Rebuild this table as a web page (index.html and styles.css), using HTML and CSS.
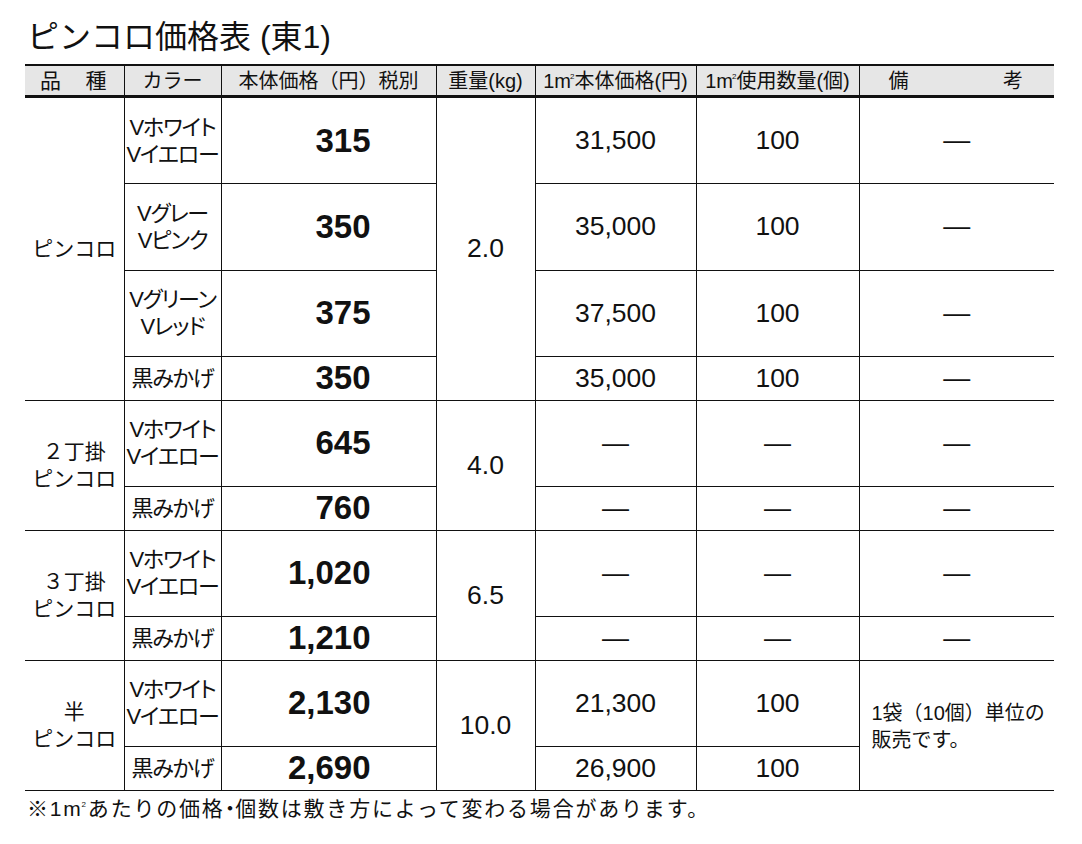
FILE: index.html
```html
<!DOCTYPE html>
<html lang="ja">
<head>
<meta charset="utf-8">
<title>ピンコロ価格表（東1）</title>
<link rel="stylesheet" href="styles.css">
</head>
<body>
<div class="page">
  <h1 class="title">ピンコロ価格表 (東1)</h1>
  <table class="price">
    <colgroup>
      <col class="c-kind"><col class="c-color"><col class="c-price"><col class="c-weight"><col class="c-unit"><col class="c-qty"><col class="c-note">
    </colgroup>
    <thead>
      <tr class="head">
        <th class="kind"><span class="spread spread-kind"><span>品</span><span>種</span></span></th>
        <th>カラー</th>
        <th>本体価格（円）税別</th>
        <th>重量(kg)</th>
        <th>1m<span class="sq">2</span>本体価格(円)</th>
        <th>1m<span class="sq">2</span>使用数量(個)</th>
        <th class="last"><span class="spread spread-note"><span>備</span><span>考</span></span></th>
      </tr>
    </thead>
    <tbody>
      <tr class="tall first">
        <td class="kind" rowspan="4">ピンコロ</td>
        <td class="color">Vホワイト<br>Vイエロー</td>
        <td class="price">315</td>
        <td class="weight" rowspan="4">2.0</td>
        <td class="num">31,500</td>
        <td class="num">100</td>
        <td class="dash last">—</td>
      </tr>
      <tr class="tall">
        <td class="color">Vグレー<br>Vピンク</td>
        <td class="price">350</td>
        <td class="num">35,000</td>
        <td class="num">100</td>
        <td class="dash last">—</td>
      </tr>
      <tr class="tall">
        <td class="color">Vグリーン<br>Vレッド</td>
        <td class="price">375</td>
        <td class="num">37,500</td>
        <td class="num">100</td>
        <td class="dash last">—</td>
      </tr>
      <tr class="short">
        <td class="color">黒みかげ</td>
        <td class="price">350</td>
        <td class="num">35,000</td>
        <td class="num">100</td>
        <td class="dash last">—</td>
      </tr>
      <tr class="tall">
        <td class="kind" rowspan="2">２丁掛<br>ピンコロ</td>
        <td class="color">Vホワイト<br>Vイエロー</td>
        <td class="price">645</td>
        <td class="weight" rowspan="2">4.0</td>
        <td class="dash">—</td>
        <td class="dash">—</td>
        <td class="dash last">—</td>
      </tr>
      <tr class="short">
        <td class="color">黒みかげ</td>
        <td class="price">760</td>
        <td class="dash">—</td>
        <td class="dash">—</td>
        <td class="dash last">—</td>
      </tr>
      <tr class="tall">
        <td class="kind" rowspan="2">３丁掛<br>ピンコロ</td>
        <td class="color">Vホワイト<br>Vイエロー</td>
        <td class="price">1,020</td>
        <td class="weight" rowspan="2">6.5</td>
        <td class="dash">—</td>
        <td class="dash">—</td>
        <td class="dash last">—</td>
      </tr>
      <tr class="short">
        <td class="color">黒みかげ</td>
        <td class="price">1,210</td>
        <td class="dash">—</td>
        <td class="dash">—</td>
        <td class="dash last">—</td>
      </tr>
      <tr class="tall">
        <td class="kind" rowspan="2">半<br>ピンコロ</td>
        <td class="color">Vホワイト<br>Vイエロー</td>
        <td class="price">2,130</td>
        <td class="weight" rowspan="2">10.0</td>
        <td class="num">21,300</td>
        <td class="num">100</td>
        <td class="note last" rowspan="2">1袋（10個）単位の<br>販売です。</td>
      </tr>
      <tr class="short">
        <td class="color">黒みかげ</td>
        <td class="price">2,690</td>
        <td class="num">26,900</td>
        <td class="num">100</td>
      </tr>
    </tbody>
  </table>
  <p class="footnote">※1m<span class="sq">2</span>あたりの価格<span class="dot">・</span>個数は敷き方によって変わる場合があります。</p>
</div>
</body>
</html>
```

FILE: styles.css
```css
html, body {
  margin: 0;
  padding: 0;
  background: #ffffff;
}

body {
  color: #111111;
  font-family: "Liberation Sans", "Noto Sans CJK JP", sans-serif;
}

.page {
  padding-left: 25px;
  width: 1029px;
}

.title {
  margin: 0;
  padding: 17px 0 0 2px;
  font-size: 32px;
  font-weight: normal;
  line-height: 40px;
}

.price {
  margin-top: 7px;
  width: 1029px;
  table-layout: fixed;
  border-collapse: collapse;
}

.c-kind { width: 99px; }
.c-color { width: 97px; }
.c-price { width: 215px; }
.c-weight { width: 99px; }
.c-unit { width: 161px; }
.c-qty { width: 163px; }
.c-note { width: 195px; }

.price th,
.price td {
  border: 1px solid #111111;
  padding: 0;
  text-align: center;
  vertical-align: middle;
}

.price .kind { border-left: none; }
.price .last { border-right: none; }

.head th {
  height: 29px;
  background: #e6e6e6;
  border-top: 2px solid #111111;
  border-bottom: 3px solid #111111;
  font-size: 20px;
  font-weight: normal;
  line-height: 24px;
  white-space: nowrap;
}

.spread {
  display: flex;
  justify-content: space-between;
}

.spread-kind { padding: 0 17px 0 15px; }
.spread-note { padding: 0 31px 0 29px; }

.sq {
  font-size: 8px;
  vertical-align: 9px;
  line-height: 0;
  margin-left: -1px;
}

.tall { height: 86.6px; }
.tall.first { height: 87px; }
.short { height: 43.4px; }

.price .kind,
.price .color,
.price .note {
  font-size: 21px;
  line-height: 27px;
}

.price .color {
  font-size: 22px;
  letter-spacing: -1.2px;
  font-feature-settings: "palt";
}

.price .price {
  text-align: right;
  padding-right: 65px;
  font-size: 33px;
  font-weight: bold;
}

.price .weight,
.price .num {
  font-size: 26.5px;
}

.price .dash {
  font-size: 27px;
}

.price .note {
  text-align: left;
  padding-left: 12px;
  font-size: 20px;
  padding-top: 3px;
}

.footnote {
  margin: 0;
  padding: 3px 0 0 2px;
  font-size: 21px;
  line-height: 30px;
  letter-spacing: 1.8px;
}

.footnote .dot {
  font-feature-settings: "palt";
  letter-spacing: 0;
}
```
